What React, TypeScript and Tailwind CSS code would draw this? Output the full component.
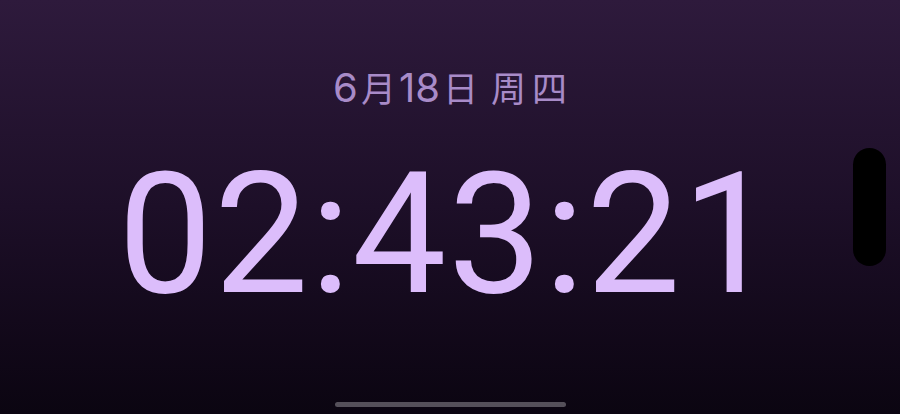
export default function App() {
  return (
    <div className="relative w-[900px] h-[414px] overflow-hidden bg-gradient-to-b from-[#2e1a3c] via-[#1d0f28] to-[#0b0511] font-['Inter','Noto_Sans_CJK_SC',sans-serif]">
      <div className="flex flex-col items-center pt-[66px]">
        <div className="flex items-baseline h-[44px] text-[40px] leading-[44px] text-[#a88bc8]">
          <span>6</span>
          <span className="text-[35px] px-[3px]">月</span>
          <span>18</span>
          <span className="text-[35px] pl-[3px] pr-[13px]">日</span>
          <span className="text-[35px] tracking-[6px] -mr-[6px]">周四</span>
        </div>
        <div className="mt-[35px] pr-[4px] font-['Roboto',sans-serif] text-[168px] leading-[180px] font-normal text-[#dcbdfb] tracking-[1.5px]">02:43:21</div>
      </div>

      {/* dynamic island cutout */}
      <div className="absolute left-[853px] top-[148px] w-[33px] h-[118px] rounded-full bg-black" />

      {/* home indicator */}
      <div className="absolute left-[335px] top-[402px] w-[231px] h-[5px] rounded-full bg-[#55505a]" />
    </div>
  )
}
